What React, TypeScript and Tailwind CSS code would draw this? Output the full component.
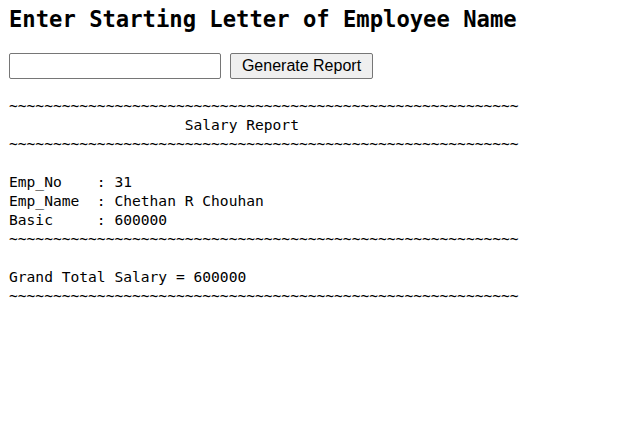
const tildes = "~".repeat(58);

const reportLines = [
  tildes,
  "                    Salary Report",
  tildes,
  "",
  "Emp_No    : 31",
  "Emp_Name  : Chethan R Chouhan",
  "Basic     : 600000",
  tildes,
  "",
  "Grand Total Salary = 600000",
  tildes,
];

export default function App() {
  return (
    <div className="min-h-[421px] bg-white pl-[9px] pt-[5px] text-black">
      <h2 className="font-['DejaVu_Sans_Mono',monospace] text-[22.2px] font-bold leading-[28px]">
        Enter Starting Letter of Employee Name
      </h2>

      <div className="mt-[20px] flex items-center">
        <input
          type="text"
          className="h-[26px] w-[212px] rounded-[2px] border border-[#767676] bg-white px-1 outline-none"
        />
        <button className="ml-[9px] h-[26px] w-[143px] rounded-[2px] border border-[#767676] bg-[#efefef] font-['Liberation_Sans',Arial,sans-serif] text-[16px] leading-none text-black">
          Generate Report
        </button>
      </div>

      <pre className="mt-[17px] font-['DejaVu_Sans_Mono',monospace] text-[14.6px] leading-[19px]">
        {reportLines.join("\n")}
      </pre>
    </div>
  );
}
